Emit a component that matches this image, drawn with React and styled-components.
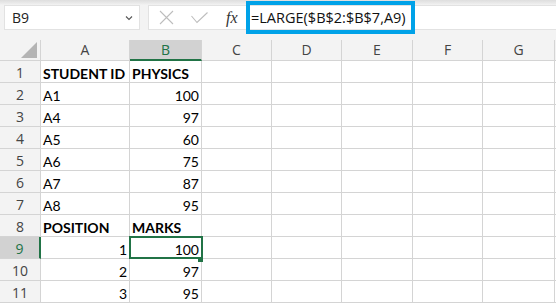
import React from "react";
import styled, { createGlobalStyle, css } from "styled-components";

const GREEN = "#217346";
const GRID = "#d4d4d4";

const Global = createGlobalStyle`
  html, body { margin: 0; padding: 0; background: #ffffff; }
  * { box-sizing: border-box; }
`;

const Page = styled.div`
  width: 556px;
  height: 303px;
  overflow: hidden;
  background: #f3f3f3;
  font-family: "Open Sans", "Noto Sans", sans-serif;
  display: flex;
  flex-direction: column;
`;

const TopBar = styled.div`
  height: 40px;
  flex: none;
  display: flex;
  align-items: flex-start;
  padding-top: 5px;
  background: linear-gradient(#dedede 0px, #e9e9e9 3px, #f3f3f3 5px);
`;

const NameBox = styled.div`
  margin-left: 4px;
  width: 136px;
  height: 25px;
  background: #fff;
  border: 1px solid #e2e2e2;
  display: flex;
  align-items: center;
  justify-content: space-between;
  padding: 0 6px 0 7px;
  font-size: 14px;
  color: #222;
`;

const FxBox = styled.div`
  margin-left: 8px;
  width: 98px;
  height: 25px;
  background: #fff;
  border: 1px solid #e2e2e2;
  border-right: none;
  display: flex;
  align-items: center;
  padding-left: 10px;
  gap: 17px;
`;

const FxLabel = styled.span`
  font-family: "Liberation Serif", "DejaVu Serif", serif;
  font-style: italic;
  font-size: 16px;
  color: #333;
  margin-left: 1px;
`;

const FormulaBox = styled.div`
  flex: 1;
  height: 25px;
  background: #fff;
  border-top: 1px solid #e2e2e2;
  border-bottom: 1px solid #e2e2e2;
  position: relative;
`;

const Highlight = styled.div`
  position: absolute;
  left: 0;
  top: -5px;
  width: 169px;
  height: 33px;
  border: 4px solid #00a2e8;
  display: flex;
  align-items: center;
  padding-left: 1px;
  font-size: 14.5px;
  color: #111;
  white-space: nowrap;
`;

const Sheet = styled.div`
  display: grid;
  grid-template-columns: 41px 89px 72px 70px 70px 71px 70px 72px 1fr;
  grid-template-rows: 21px;
  grid-auto-rows: 22px;
  background: #fff;
`;

const ColHead = styled.div`
  background: #f3f3f3;
  border-right: 1px solid ${GRID};
  border-bottom: 1px solid ${GRID};
  display: flex;
  align-items: center;
  justify-content: center;
  font-size: 14px;
  line-height: 20px;
  color: #444;
  ${(p) =>
    p.$active &&
    css`
      background: #d2d2d2;
      color: ${GREEN};
      border-bottom: 2px solid ${GREEN};
    `}
  ${(p) => p.$last && css`border-right: none;`}
`;

const Corner = styled(ColHead)`
  position: relative;
  svg { position: absolute; left: 20px; top: 0px; }
`;

const RowHead = styled.div`
  background: #f3f3f3;
  border-right: 1px solid ${GRID};
  border-bottom: 1px solid ${GRID};
  display: flex;
  align-items: flex-end;
  justify-content: center;
  font-size: 14px;
  line-height: 19px;
  color: #444;
  ${(p) =>
    p.$active &&
    css`
      background: #d2d2d2;
      color: ${GREEN};
      border-right: 2px solid ${GREEN};
    `}
`;

const Cell = styled.div`
  position: relative;
  border-right: 1px solid ${GRID};
  border-bottom: 1px solid ${GRID};
  display: flex;
  align-items: flex-end;
  justify-content: ${(p) => (p.$num ? "flex-end" : "flex-start")};
  padding: 0 2px 0 2px;
  font-family: "Lato", "Open Sans", sans-serif;
  font-size: 14px;
  font-weight: ${(p) => (p.$bold ? 700 : 400)};
  line-height: 17px;
  color: #000;
  white-space: nowrap;
  ${(p) => p.$last && css`border-right: none;`}
`;

const Selection = styled.div`
  position: absolute;
  left: -1px;
  top: -1px;
  width: 74px;
  height: 23px;
  border: 2px solid ${GREEN};
  z-index: 2;
  pointer-events: none;
`;

const FillHandle = styled.div`
  position: absolute;
  left: 68px;
  top: 20px;
  width: 5px;
  height: 5px;
  background: ${GREEN};
  z-index: 3;
`;

const cols = ["A", "B", "C", "D", "E", "F", "G"];

const rows = [
  { a: "STUDENT ID", b: "PHYSICS", bold: true },
  { a: "A1", b: 100 },
  { a: "A4", b: 97 },
  { a: "A5", b: 60 },
  { a: "A6", b: 75 },
  { a: "A7", b: 87 },
  { a: "A8", b: 95 },
  { a: "POSITION", b: "MARKS", bold: true },
  { a: 1, b: 100, selected: true },
  { a: 2, b: 97 },
  { a: 3, b: 95 },
];

const Chevron = () => (
  <svg width="8" height="6" viewBox="0 0 8 6">
    <polyline points="1,1.5 4,4.5 7,1.5" fill="none" stroke="#555" strokeWidth="1.1" />
  </svg>
);

const CancelIcon = () => (
  <svg width="15" height="15" viewBox="0 0 15 15">
    <path d="M1 1 L14 14 M14 1 L1 14" stroke="#bdbdbd" strokeWidth="1.1" fill="none" />
  </svg>
);

const CheckIcon = () => (
  <svg width="17" height="12" viewBox="0 0 17 12">
    <polyline points="0.5,4 6,10.5 16.5,0.5" stroke="#bdbdbd" strokeWidth="1.1" fill="none" />
  </svg>
);

export default function App() {
  return (
    <Page>
      <Global />
      <TopBar>
        <NameBox>
          <span>B9</span>
          <Chevron />
        </NameBox>
        <FxBox>
          <CancelIcon />
          <CheckIcon />
          <FxLabel>fx</FxLabel>
        </FxBox>
        <FormulaBox>
          <Highlight>=LARGE($B$2:$B$7,A9)</Highlight>
        </FormulaBox>
      </TopBar>
      <Sheet>
        <Corner>
          <svg width="18" height="20" viewBox="0 0 18 20">
            <polygon points="17,2 17,18 1,18" fill="#b4b4b4" />
          </svg>
        </Corner>
        {cols.map((c) => (
          <ColHead key={c} $active={c === "B"}>
            {c}
          </ColHead>
        ))}
        <ColHead $last />
        {rows.map((r, i) => (
          <React.Fragment key={i}>
            <RowHead $active={r.selected}>{i + 1}</RowHead>
            <Cell $bold={r.bold} $num={typeof r.a === "number"}>
              {r.a}
            </Cell>
            <Cell $bold={r.bold} $num={typeof r.b === "number"}>
              {r.b}
              {r.selected && (
                <>
                  <Selection />
                  <FillHandle />
                </>
              )}
            </Cell>
            {cols.slice(2).map((c) => (
              <Cell key={c} />
            ))}
            <Cell $last />
          </React.Fragment>
        ))}
      </Sheet>
    </Page>
  );
}
